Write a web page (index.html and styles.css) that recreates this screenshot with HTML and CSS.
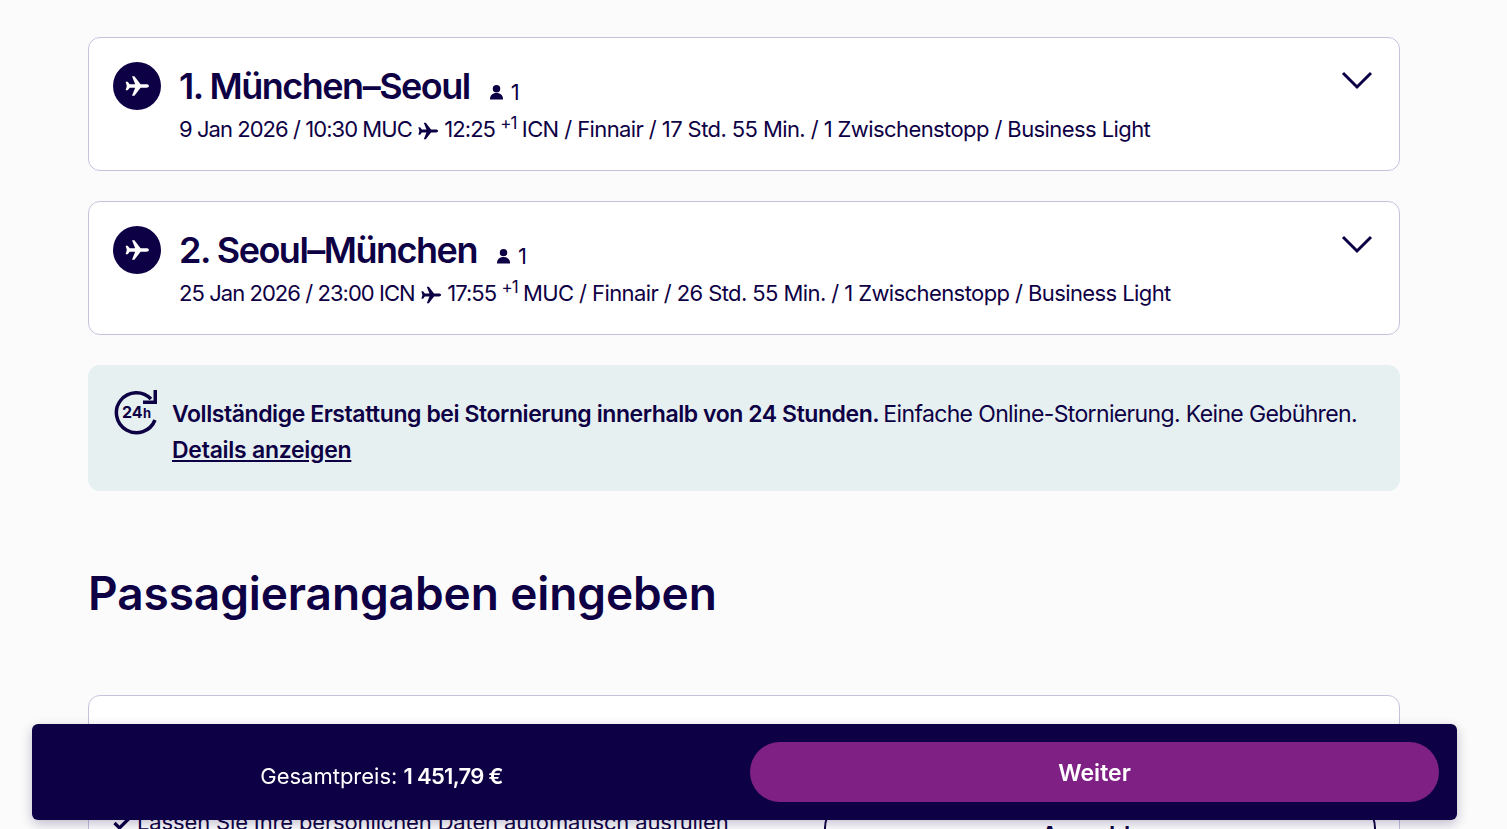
FILE: index.html
```html
<!DOCTYPE html>
<html lang="de">
<head>
    <meta charset="UTF-8">
    <title>Passagierangaben</title>
    <link rel="stylesheet" href="styles.css">
</head>
<body>

<svg class="defs" width="0" height="0">
    <symbol id="plane" viewBox="0 0 24 24">
        <path d="M23 12c0-1-1-1.600-2.300-1.600h-5.400L9.600 3H7.400l2.900 7.400H5.300L3.400 8H1.500l1.100 4-1.100 4h1.900l1.900-2.400h5L7.400 21h2.200l5.700-7.400h5.400C22 13.600 23 13 23 12z"/>
    </symbol>
    <symbol id="person" viewBox="0 0 16 16">
        <circle cx="8" cy="4.400" r="4"/>
        <path d="M1 16c0-4.500 2.500-7 7-7s7 2.500 7 7z"/>
    </symbol>
    <symbol id="chevron" viewBox="0 0 32 20">
        <path d="M2 3l14 14L30 3" fill="none" stroke="currentColor" stroke-width="3"/>
    </symbol>
</svg>

<main class="content">
    <section class="trip">
        <span class="trip-icon"><svg><use href="#plane"/></svg></span>
        <div class="trip-body">
            <div class="trip-title">
                <h2>1. München–Seoul</h2>
                <span class="pax"><svg><use href="#person"/></svg>1</span>
            </div>
            <p class="trip-info">9 Jan 2026 / 10:30 MUC <svg class="mini-plane"><use href="#plane"/></svg> 12:25 <sup>+1</sup> <span class="trip-rest">ICN / Finnair / 17 Std. 55 Min. / 1 Zwischenstopp / Business Light</span></p>
        </div>
        <svg class="chevron"><use href="#chevron"/></svg>
    </section>

    <section class="trip">
        <span class="trip-icon"><svg><use href="#plane"/></svg></span>
        <div class="trip-body">
            <div class="trip-title">
                <h2>2. Seoul–München</h2>
                <span class="pax"><svg><use href="#person"/></svg>1</span>
            </div>
            <p class="trip-info">25 Jan 2026 / 23:00 ICN <svg class="mini-plane"><use href="#plane"/></svg> 17:55 <sup>+1</sup> <span class="trip-rest">MUC / Finnair / 26 Std. 55 Min. / 1 Zwischenstopp / Business Light</span></p>
        </div>
        <svg class="chevron"><use href="#chevron"/></svg>
    </section>

    <section class="notice">
        <svg class="notice-icon" viewBox="0 0 44 46">
            <path d="M41 31a20 20 0 1 1-4-21" fill="none" stroke="currentColor" stroke-width="3.500"/>
            <path d="M43 1v14H29v-3.500h10.500V1z"/>
            <text x="8" y="29" class="icon-24">24</text>
            <text x="29" y="29" class="icon-h">h</text>
        </svg>
        <p><strong>Vollständige Erstattung bei Stornierung innerhalb von 24 Stunden.</strong> <span class="notice-rest">Einfache Online-Stornierung. Keine Gebühren.</span><br><a href="#">Details anzeigen</a></p>
    </section>

    <h1>Passagierangaben eingeben</h1>

    <section class="login-card">
        <div class="login-text">
            <svg class="check" viewBox="0 0 18 14"><path d="M1.500 7l5 5L16.500 2" fill="none" stroke="currentColor" stroke-width="3.200"/></svg>
            Lassen Sie Ihre persönlichen Daten automatisch ausfüllen
        </div>
        <button class="login-btn">Anmelden</button>
    </section>
</main>

<footer class="price-bar">
    <div class="price">Gesamtpreis: <b>1 451,79 €</b></div>
    <button class="next-btn">Weiter</button>
</footer>

</body>
</html>
```

FILE: styles.css
```css
* {
    box-sizing: border-box;
    margin: 0;
    padding: 0;
}

html, body {
    height: 829px;
    overflow: hidden;
}

body {
    font-family: "Inter", "Liberation Sans", sans-serif;
    background-color: #fbfbfb;
    color: #0e0044;
}

.defs {
    position: absolute;
}

.content {
    width: 1312px;
    margin-left: 88px;
    padding-top: 37px;
    display: flex;
    flex-direction: column;
}

.trip {
    height: 134px;
    margin-bottom: 30px;
    padding: 24px 26px 0 24px;
    display: flex;
    background-color: #fff;
    border: 1px solid #c5c3dc;
    border-radius: 12px;
}

.trip-icon {
    width: 48px;
    height: 48px;
    margin-right: 18px;
    flex-shrink: 0;
    display: flex;
    align-items: center;
    justify-content: center;
    background-color: #0e0044;
    border-radius: 50%;
}

.trip-icon svg {
    width: 26px;
    height: 26px;
    fill: #fff;
}

.trip-body {
    flex: 1;
}

.trip-title {
    display: flex;
    height: 48px;
}

.trip-title h2 {
    font-size: 36px;
    line-height: 48px;
    font-weight: 600;
    letter-spacing: -1.500px;
}

.pax {
    margin-left: 19px;
    margin-top: 18px;
    height: 24px;
    font-size: 22px;
    line-height: 24px;
    display: flex;
    align-items: center;
    gap: 7px;
}

.pax svg {
    width: 15px;
    height: 16px;
    fill: #0e0044;
}

.trip-info {
    margin-top: 4px;
    font-size: 22px;
    line-height: 30px;
    white-space: nowrap;
    letter-spacing: -0.950px;
}

.trip-rest {
    letter-spacing: -0.590px;
}

.mini-plane {
    width: 22px;
    height: 22px;
    fill: #0e0044;
    vertical-align: -5px;
}

.trip-info sup {
    font-size: 17px;
    line-height: 0;
}

.chevron {
    width: 32px;
    height: 20px;
    margin-top: 8px;
    color: #0e0044;
}

.notice {
    height: 126px;
    padding: 31px 24px 0 26px;
    display: flex;
    background-color: #e6f0f1;
    border-radius: 12px;
}

.notice-icon {
    width: 44px;
    height: 46px;
    margin-top: -7px;
    margin-right: 14px;
    flex-shrink: 0;
    fill: #0e0044;
    color: #0e0044;
}

.icon-24 {
    font-size: 16px;
    font-weight: 700;
}

.icon-h {
    font-size: 13px;
    font-weight: 700;
}

.notice p {
    font-size: 23px;
    line-height: 36px;
    white-space: nowrap;
    letter-spacing: -0.430px;
}

.notice strong {
    font-weight: 600;
}

.notice-rest {
    letter-spacing: -0.640px;
    margin-left: -2px;
}

.notice a {
    color: #0e0044;
    font-weight: 600;
    letter-spacing: -0.270px;
}

h1 {
    margin-top: 70px;
    font-size: 46px;
    line-height: 64px;
    font-weight: 600;
    letter-spacing: -0.100px;
}

.login-card {
    height: 200px;
    margin-top: 70px;
    position: relative;
    background-color: #fff;
    border: 1px solid #c5c3dc;
    border-radius: 12px;
}

.login-text {
    position: absolute;
    left: 24px;
    top: 113px;
    font-size: 22px;
    letter-spacing: -0.150px;
    white-space: nowrap;
}

.check {
    width: 18px;
    height: 14px;
    color: #0e0044;
}

.login-btn {
    position: absolute;
    left: 735px;
    top: 104px;
    width: 552px;
    height: 56px;
    padding-top: 14px;
    font-family: inherit;
    font-size: 24px;
    font-weight: 600;
    color: #0e0044;
    background: none;
    border: 2px solid #0e0044;
    border-radius: 28px;
}

.price-bar {
    position: fixed;
    left: 32px;
    top: 724px;
    width: 1425px;
    height: 96px;
    padding-left: 18px;
    padding-right: 18px;
    display: flex;
    align-items: center;
    background-color: #0e0044;
    border-radius: 6px;
    box-shadow: 0 4px 12px rgba(14, 0, 68, 0.25);
}

.price {
    width: 663px;
    text-align: center;
    font-size: 22px;
    color: #fff;
    padding-top: 8px;
}

.price b {
    font-weight: 600;
    letter-spacing: -0.700px;
}

.next-btn {
    margin-left: 37px;
    flex: 1;
    height: 60px;
    padding-top: 2px;
    font-family: inherit;
    font-size: 23px;
    font-weight: 600;
    color: #fff;
    background-color: #7f2085;
    border: none;
    border-radius: 30px;
}
```
